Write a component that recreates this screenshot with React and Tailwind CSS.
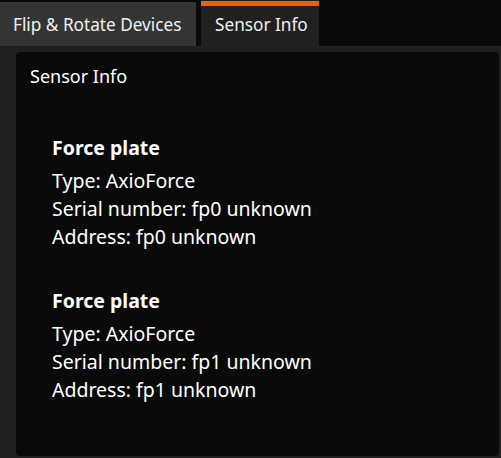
import React from 'react';

const sensors = [
  { name: 'Force plate', type: 'AxioForce', serial: 'fp0 unknown', address: 'fp0 unknown' },
  { name: 'Force plate', type: 'AxioForce', serial: 'fp1 unknown', address: 'fp1 unknown' },
];

const App = () => {
  return (
    <div
      className="w-[501px] h-[458px] bg-[#0a0a0a] flex flex-col overflow-hidden text-white"
      style={{ fontFamily: '"Noto Sans", "Open Sans", sans-serif' }}
    >
      {/* Tabs */}
      <div className="flex h-[46px] shrink-0">
        <div className="mt-[2px] w-[196px] h-[44px] bg-[#333535] flex items-center pl-[13px] pt-[2px] text-[17.2px] text-[#f0f0f0]">
          Flip &amp; Rotate Devices
        </div>
        <div className="ml-[5px] w-[118px] bg-[#202020] flex flex-col">
          <div className="mt-[1px] h-[5px] bg-[#f25c05]" />
          <div className="flex-1 flex items-center pl-[14px] pb-[2px] text-[17.2px] text-[#f0f0f0]">Sensor Info</div>
        </div>
      </div>

      {/* Content panel */}
      <div className="flex-1 bg-[#202020] pl-[16px] pt-[6px] pr-[2px] pb-[2px] flex">
        <div className="flex-1 bg-[#0a0a0a] rounded-[4px] pt-[10px] pl-[14px]">
          <div className="text-[18px] leading-[28px]">Sensor Info</div>
          <div className="mt-[44px] ml-[22px] flex flex-col gap-[36px]">
            {sensors.map((s, i) => (
              <div key={i} className="flex flex-col text-[19.5px] leading-[28px]">
                <div className="font-bold mb-[5px]">{s.name}</div>
                <div>Type: {s.type}</div>
                <div>Serial number: {s.serial}</div>
                <div>Address: {s.address}</div>
              </div>
            ))}
          </div>
        </div>
      </div>
    </div>
  );
};

export default App;
